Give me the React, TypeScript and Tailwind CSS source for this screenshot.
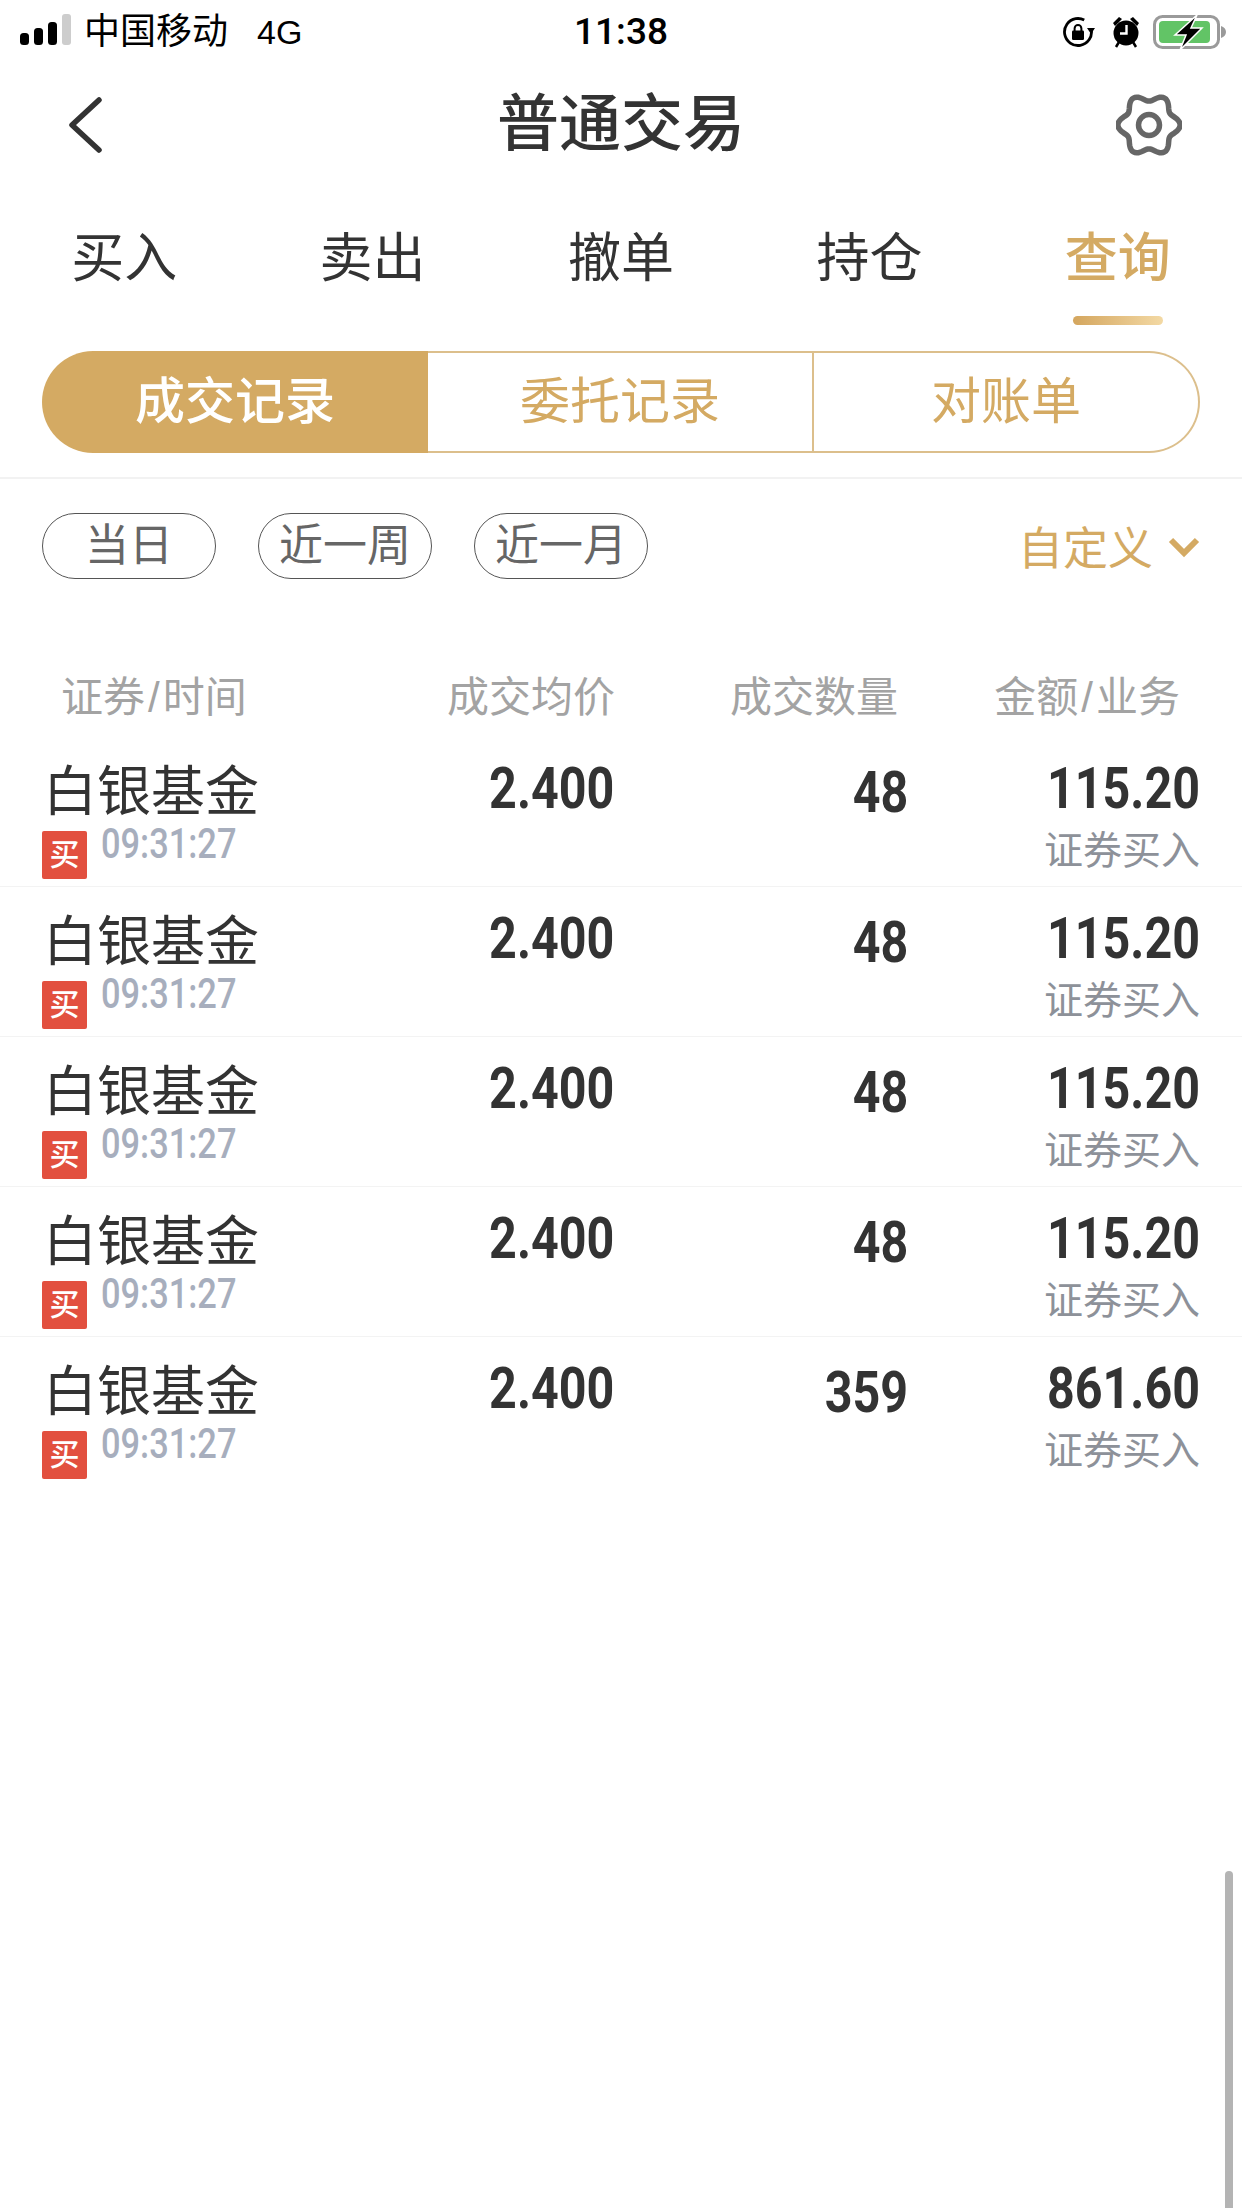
import React from "react";

const gold = "#d4aa63";

const gearPath = (() => {
  const pts: string[] = [];
  for (let i = 0; i < 120; i++) {
    const t = (i / 120) * Math.PI * 2;
    const r = 27.5 + 3.6 * Math.cos(6 * t);
    pts.push(`${(33 + r * Math.cos(t)).toFixed(2)} ${(33 + r * Math.sin(t)).toFixed(2)}`);
  }
  return `M${pts.join("L")}Z`;
})();

const StatusIcons = () => (
  <div className="flex items-center">
    <svg width="32" height="32" viewBox="0 0 32 32" className="mr-[17px]">
      <circle cx="15" cy="16" r="13.5" fill="none" stroke="#000" strokeWidth="2.8" strokeDasharray="72 13" transform="rotate(-10 15 16)" />
      <path d="M24 12h8l-4 6z" fill="#000" />
      <rect x="9" y="14.5" width="12" height="9.5" rx="1.2" fill="#000" />
      <path d="M11.6 15v-2.6a3.4 3.4 0 0 1 6.8 0V15" fill="none" stroke="#000" strokeWidth="2" />
    </svg>
    <svg width="28" height="32" viewBox="0 0 28 32" className="mr-[13px]">
      <circle cx="14" cy="17" r="12.5" fill="#000" />
      <path d="M1 7l6-6 3 2-7 7zM27 7l-6-6-3 2 7 7z" fill="#000" />
      <path d="M4 31l3-5M24 31l-3-5" stroke="#000" strokeWidth="2.5" />
      <path d="M14.5 9v8.5H8" fill="none" stroke="#fff" strokeWidth="2.4" />
    </svg>
    <svg width="73" height="36" viewBox="0 0 73 36">
      <rect x="1.5" y="2.5" width="64" height="31" rx="8" fill="none" stroke="#9a9a9a" strokeWidth="3" />
      <rect x="6" y="7" width="51" height="22" rx="4" fill="#62c466" />
      <path d="M68 12c3 1 5 3 5 6s-2 5-5 6z" fill="#9a9a9a" />
      <path d="M44 1 22 21h11l-6 15 22-22H38z" fill="#000" stroke="#fff" strokeWidth="1.5" />
    </svg>
  </div>
);

const Row = ({ qty, amount }: { qty: string; amount: string }) => (
  <div className="flex h-[150px] border-b border-[#f3f3f3] pl-[42px] pr-[42px]">
    <div className="w-[300px] pt-[25px]">
      <div className="ml-[1px] h-[60px] text-[54px] leading-[60px] text-[#333]">白银基金</div>
      <div className="mt-[9px] flex items-start">
        <div className="flex h-[48px] w-[45px] items-center justify-center rounded-[2px] bg-[#e2503f] text-[30px] font-medium leading-none text-white">买</div>
        <div className="ml-[14px] -mt-[8px] origin-left scale-x-[0.8] font-['Roboto',sans-serif] text-[43px] font-medium leading-[40px] text-[#a7aebd]">09:31:27</div>
      </div>
    </div>
    <div className="w-[272px] pt-[23px] text-right">
      <span className="inline-block origin-right scale-x-[0.85] font-['Roboto',sans-serif] text-[57px] font-bold leading-[58px] text-[#333]">2.400</span>
    </div>
    <div className="w-[294px] pt-[27px] text-right">
      <span className="inline-block origin-right scale-x-[0.85] font-['Roboto',sans-serif] text-[57px] font-bold leading-[58px] text-[#333]">{qty}</span>
    </div>
    <div className="flex-1 pt-[23px] text-right">
      <div className="origin-right scale-x-[0.85] font-['Roboto',sans-serif] text-[57px] font-bold leading-[58px] text-[#333]">{amount}</div>
      <div className="mt-[8px] text-[39px] leading-[50px] text-[#8d9199]">证券买入</div>
    </div>
  </div>
);

const rows = [
  { qty: "48", amount: "115.20" },
  { qty: "48", amount: "115.20" },
  { qty: "48", amount: "115.20" },
  { qty: "48", amount: "115.20" },
  { qty: "359", amount: "861.60" },
];

export default function App() {
  return (
    <div className="relative min-h-[2208px] overflow-hidden bg-white font-['Liberation_Sans','Noto_Sans_CJK_SC',sans-serif]">
      {/* status bar */}
      <div className="grid h-[60px] grid-cols-[1fr_auto_1fr] items-center pt-[3px] text-black">
        <div className="flex items-center pl-[20px]">
          <svg width="51" height="31" viewBox="0 0 51 31" className="-mt-[4px]">
            <rect x="0" y="19" width="9" height="12" rx="3.5" fill="#000" />
            <rect x="14" y="14" width="9" height="17" rx="3.5" fill="#000" />
            <rect x="28" y="8" width="9" height="23" rx="3.5" fill="#000" />
            <rect x="42" y="0" width="9" height="31" rx="3" fill="#cdcdcd" />
          </svg>
          <span className="ml-[13px] text-[36px] leading-[40px]">中国移动</span>
          <span className="ml-[29px] text-[34px] leading-[40px]">4G</span>
        </div>
        <div className="font-['Roboto',sans-serif] text-[37px] font-medium leading-[40px]">11:38</div>
        <div className="flex justify-end pr-[16px]">
          <StatusIcons />
        </div>
      </div>

      {/* nav */}
      <div className="flex h-[126px] items-center justify-between pl-[66px] pr-[60px] pt-[3px]">
        <div className="w-[200px]">
          <svg width="38" height="56" viewBox="0 0 38 56" fill="none" stroke="#333" strokeWidth="5.5" strokeLinecap="round" strokeLinejoin="round">
            <path d="M33 3 6 28l27 25" />
          </svg>
        </div>
        <div className="text-[62px] font-medium leading-[70px] text-[#333]">普通交易</div>
        <div className="flex w-[206px] justify-end">
          <svg width="66" height="66" viewBox="0 0 66 66" fill="none" stroke="#666" strokeWidth="5.5">
            <path d={gearPath} />
            <circle cx="33" cy="33" r="10.5" />
          </svg>
        </div>
      </div>

      {/* tabs */}
      <div className="grid h-[140px] grid-cols-5">
        {["买入", "卖出", "撤单", "持仓"].map((t) => (
          <div key={t} className="pt-[43px] text-center text-[53px] leading-[60px] text-[#333]">{t}</div>
        ))}
        <div className="flex flex-col items-center pt-[43px]">
          <div className="text-[53px] font-medium leading-[60px] text-[#d4aa63]">查询</div>
          <div className="mt-[27px] h-[9px] w-[90px] rounded-full bg-linear-to-r from-[#d4a65e] to-[#f3d9a4]" />
        </div>
      </div>

      {/* segmented control */}
      <div className="mx-[42px] mt-[25px] flex h-[102px] text-[50px] leading-[60px]">
        <div className="flex w-[386px] items-center justify-center rounded-l-full bg-[#d4aa63] font-medium text-white">成交记录</div>
        <div className="flex w-[386px] items-center justify-center border-y-2 border-r-2 border-[#dcbf8c] text-[#d4aa63]">委托记录</div>
        <div className="flex flex-1 items-center justify-center rounded-r-full border-y-2 border-r-2 border-[#dcbf8c] text-[#d4aa63]">对账单</div>
      </div>
      <div className="mt-[24px] h-[2px] bg-[#f2f2f2]" />

      {/* date filters */}
      <div className="flex items-center justify-between pl-[42px] pr-[42px] pt-[34px]">
        <div className="flex gap-[42px]">
          {["当日", "近一周", "近一月"].map((t) => (
            <div key={t} className="flex h-[66px] w-[174px] items-center justify-center rounded-full border border-[#555] text-[44px] leading-[50px] text-[#666]">{t}</div>
          ))}
        </div>
        <div className="flex h-[50px] items-start text-[45px] leading-[50px]" style={{ color: gold }}>
          <span className="mt-[4px]">自定义</span>
          <svg width="32" height="22" viewBox="0 0 32 22" fill="none" stroke="#d4aa63" strokeWidth="6" className="ml-[15px] mt-[15px]">
            <path d="M3 4l13 13L29 4" />
          </svg>
        </div>
      </div>

      {/* table head */}
      <div className="mt-[94px] flex h-[50px] pl-[61px] pr-[62px] text-[42px] leading-[50px] text-[#a3a3a3]">
        <div className="w-[281px]">证券<span className="mx-[3px]">/</span>时间</div>
        <div className="w-[273px] text-right">成交均价</div>
        <div className="w-[283px] text-right">成交数量</div>
        <div className="flex-1 text-right">金额<span className="mx-[3px]">/</span>业务</div>
      </div>

      <div className="mt-[14px]">
        {rows.map((r, i) => (
          <div key={i} className={i === rows.length - 1 ? "[&>div]:border-b-0" : ""}>
            <Row qty={r.qty} amount={r.amount} />
          </div>
        ))}
      </div>

      {/* scroll indicator */}
      <div className="absolute bottom-0 right-[9px] h-[337px] w-[8px] rounded-t-full bg-[#b4b4b4]" />
    </div>
  );
}
